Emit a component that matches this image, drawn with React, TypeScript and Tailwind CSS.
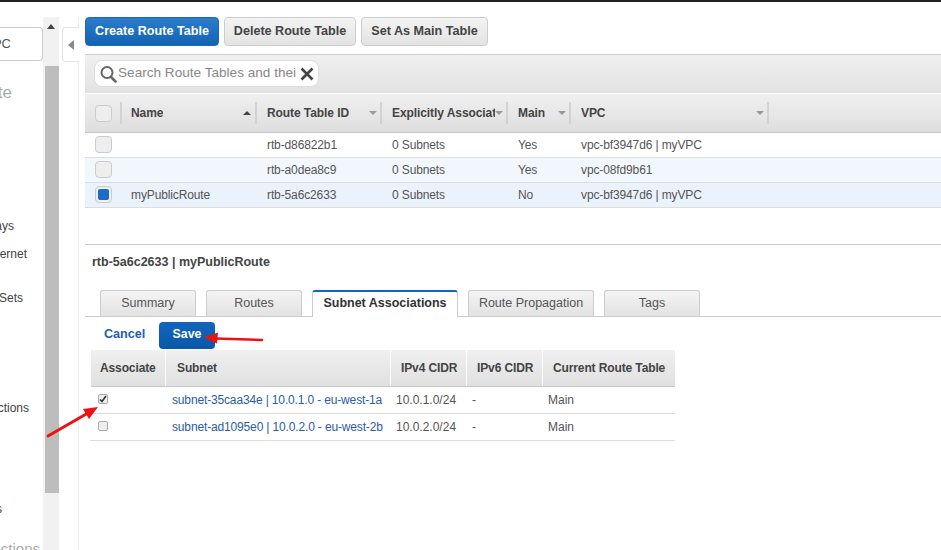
import { ReactNode } from 'react'

const routeRows = [
  { name: '', id: 'rtb-d86822b1', assoc: '0 Subnets', main: 'Yes', vpc: 'vpc-bf3947d6 | myVPC', bg: 'bg-white', checked: false },
  { name: '', id: 'rtb-a0dea8c9', assoc: '0 Subnets', main: 'Yes', vpc: 'vpc-08fd9b61', bg: 'bg-[#f1f7fd]', checked: false },
  { name: 'myPublicRoute', id: 'rtb-5a6c2633', assoc: '0 Subnets', main: 'No', vpc: 'vpc-bf3947d6 | myVPC', bg: 'bg-[#eaf2fb]', checked: true },
]

const subnetRows = [
  { subnet: 'subnet-35caa34e | 10.0.1.0 - eu-west-1a', cidr: '10.0.1.0/24', checked: true },
  { subnet: 'subnet-ad1095e0 | 10.0.2.0 - eu-west-2b', cidr: '10.0.2.0/24', checked: false },
]

const Btn = ({ children, primary, className }: { children: ReactNode; primary?: boolean; className: string }) => (
  <div className={`h-[29px] flex items-center justify-center rounded-[4px] border text-[12.6px] font-bold ${primary ? 'border-[#1d66b0] bg-gradient-to-b from-[#2b7ccb] to-[#1263b5] text-white' : 'border-[#ccc] bg-gradient-to-b from-[#f3f3f3] to-[#e3e3e3] text-[#444]'} ${className}`}>
    {children}
  </div>
)

const Sort = ({ up }: { up?: boolean }) => (
  <div className={`w-0 h-0 border-x-[4px] border-x-transparent ${up ? 'border-b-[4px] border-b-[#444]' : 'border-t-[4px] border-t-[#999]'}`} />
)

const HeadCell = ({ label, up, className }: { label: string; up?: boolean; className?: string }) => (
  <div className={`h-[22px] flex items-center justify-between border-r-2 border-r-[#d2d2d2] overflow-hidden ${className ?? 'pl-[10px] pr-[3px]'}`}>
    <span className="whitespace-nowrap overflow-hidden">{label}</span>
    <div className="shrink-0"><Sort up={up} /></div>
  </div>
)

const Tab = ({ label, active, className }: { label: string; active?: boolean; className: string }) => (
  <div className={`flex items-center justify-center rounded-t-[3px] ${active ? 'h-[27px] pb-[2px] border-x border-x-[#ccc] border-t-2 border-t-[#1166bb] bg-white font-bold text-[#333] text-[12.5px]' : 'h-[26px] border border-b-0 border-[#ccc] bg-gradient-to-b from-[#f4f4f4] to-[#e2e2e2] text-[#555] text-[12.5px]'} ${className}`}>
    {label}
  </div>
)

const SideItem = ({ label, className }: { label: string; className: string }) => (
  <div className={`flex justify-end whitespace-nowrap ${className}`}>{label}</div>
)

export default function App() {
  return (
    <div className="relative w-[941px] h-[550px] overflow-hidden bg-white text-[12px] text-[#444] font-['Liberation_Sans',Arial,sans-serif]">
      <div className="h-[2px] bg-[#222]" />
      <div className="flex h-[548px]">
        {/* left nav, cut off by the scroll position */}
        <div className="w-[43px] shrink-0 overflow-hidden">
          <div className="mt-[25px] h-[34px] w-[43px] flex items-center justify-end pr-[31px] rounded-r-[4px] border border-l-0 border-[#ccc] whitespace-nowrap text-[13px] text-[#555]">
            Filter by VPC
          </div>
          <SideItem label="Route" className="mt-[21px] pr-[31px] text-[17px] leading-[22px] text-[#aaa]" />
          <SideItem label="Egress Only Gateways" className="mt-[115px] pr-[29px] leading-[14px]" />
          <SideItem label="Egress Internet" className="mt-[14px] pr-[16px] leading-[14px]" />
          <SideItem label="DHCP Options Sets" className="mt-[30px] pr-[20px] leading-[14px]" />
          <SideItem label="Peering Connections" className="mt-[96px] pr-[14px] leading-[14px]" />
          <SideItem label="Endpoints" className="mt-[87px] pr-[41px] leading-[14px]" />
          <SideItem label="Connections" className="mt-[24px] pr-[3px] text-[15px] leading-[18px] text-[#aaa]" />
        </div>

        {/* scrollbar */}
        <div className="w-[16px] shrink-0 mt-[15px] bg-[#f1f1f1] flex flex-col items-center">
          <div className="mt-[7px] w-0 h-0 border-x-[4px] border-x-transparent border-b-[5px] border-b-[#444]" />
          <div className="mt-[37px] ml-[1px] w-[14px] h-[427px] bg-[#bdbdbd]" />
        </div>

        {/* collapse handle + divider */}
        <div className="w-[20px] shrink-0 mt-[15px] border-r border-r-[#eee] pl-[3px]">
          <div className="mt-[10px] h-[35px] w-[17px] border border-r-0 border-[#e4e4e4] rounded-l-[4px] bg-white flex items-center justify-center">
            <div className="w-0 h-0 border-y-[5px] border-y-transparent border-r-[6px] border-r-[#888]" />
          </div>
        </div>

        {/* main pane */}
        <div className="flex-1 min-w-0 pl-[6px]">
          <div className="mt-[15px] flex gap-[5px]">
            <Btn primary className="w-[134px]">Create Route Table</Btn>
            <Btn className="w-[132px]">Delete Route Table</Btn>
            <Btn className="w-[127px]">Set As Main Table</Btn>
          </div>

          <div className="mt-[8px] h-[39px] border-t border-[#ccc] bg-gradient-to-b from-[#f0f0f0] to-[#e2e2e2] pl-[9px] pt-[5px]">
            <div className="w-[225px] h-[27px] bg-white border border-[#ddd] rounded-[8px] flex items-center pl-[5px] pr-[3px]">
              <svg width="17" height="18" viewBox="0 0 17 18" className="shrink-0" fill="none" stroke="#666" strokeWidth="2">
                <circle cx="7" cy="7.5" r="5.5" />
                <path d="M11 12l4.500 4.500" strokeWidth="2.500" strokeLinecap="round" />
              </svg>
              <span className="ml-[1px] w-[178px] overflow-hidden whitespace-nowrap text-[13.6px] text-[#888]">Search Route Tables and their Properties</span>
              <svg width="14" height="14" viewBox="0 0 14 14" className="ml-[4px] shrink-0" stroke="#444" strokeWidth="2.600">
                <path d="M1.500 1.500l11 11M12.500 1.500l-11 11" />
              </svg>
            </div>
          </div>

          <div className="h-[40px] border-t border-t-white border-b border-b-[#c8c8c8] bg-gradient-to-b from-[#f0f0f0] to-[#dedede] grid grid-cols-[37px_135px_125px_126px_63px_198px_1fr] items-center font-bold tracking-[-0.08px]">
            <div className="h-[22px] border-r-2 border-r-[#d2d2d2] pl-[10px] flex items-center">
              <div className="w-[17px] h-[17px] rounded-[4px] border border-[#ccc] bg-[#eee]" />
            </div>
            <HeadCell label="Name" up className="pl-[9px] pr-[4px]" />
            <HeadCell label="Route Table ID" />
            <HeadCell label="Explicitly Associated" />
            <HeadCell label="Main" />
            <HeadCell label="VPC" />
          </div>

          {routeRows.map((row) => (
            <div key={row.id} className={`h-[25px] border-b border-b-[#ddd] grid grid-cols-[36px_136px_125px_126px_63px_1fr] items-center text-[#555] tracking-[-0.12px] ${row.bg}`}>
              <div className="pl-[10px] h-[24px] overflow-hidden pt-[3px]">
                <div className="w-[17px] h-[17px] rounded-[4px] border border-[#ccc] bg-[#eee] p-[2px]">
                  {row.checked && <div className="w-full h-full rounded-[2px] bg-[#1a6cc4]" />}
                </div>
              </div>
              <div className="pl-[10px]">{row.name}</div>
              <div className="pl-[10px]">{row.id}</div>
              <div className="pl-[10px]">{row.assoc}</div>
              <div className="pl-[10px]">{row.main}</div>
              <div className="pl-[10px]">{row.vpc}</div>
            </div>
          ))}

          <div className="mt-[36px] border-t border-[#ccc] pl-[7px] pt-[8px] h-[46px] font-bold text-[12.5px] text-[#444]">
            rtb-5a6c2633 | myPublicRoute
          </div>

          <div className="h-[27px] border-b border-[#ccc] flex items-end gap-[10px] pl-[15px]">
            <Tab label="Summary" className="w-[96px]" />
            <Tab label="Routes" className="w-[96px]" />
            <Tab label="Subnet Associations" active className="w-[146px] -mb-px" />
            <Tab label="Route Propagation" className="w-[126px]" />
            <Tab label="Tags" className="w-[96px]" />
          </div>

          <div className="mt-[5px] flex items-center pl-[19px] h-[27px]">
            <span className="w-[55px] pb-[2px] text-[#1f5fb0] font-bold text-[12.6px]">Cancel</span>
            <div className="w-[56px] h-[27px] pb-[2px] rounded-[4px] bg-gradient-to-b from-[#1166bb] to-[#0b57a8] text-white font-bold text-[12.4px] flex items-center justify-center">Save</div>
          </div>

          <div className="ml-[6px] mt-[1px] w-[584px]">
            <div className="h-[37px] border-b border-b-[#c8c8c8] bg-gradient-to-b from-[#f0f0f0] to-[#e0e0e0] grid grid-cols-[75px_225px_76px_76px_1fr] items-center font-bold tracking-[-0.12px]">
              <div className="h-full flex items-center pl-[9px] border-r border-r-white">Associate</div>
              <div className="h-full flex items-center pl-[11px] border-r border-r-white">Subnet</div>
              <div className="h-full flex items-center pl-[10px] border-r border-r-white">IPv4 CIDR</div>
              <div className="h-full flex items-center pl-[10px] border-r border-r-white">IPv6 CIDR</div>
              <div className="h-full flex items-center pl-[10px]">Current Route Table</div>
            </div>
            {subnetRows.map((row) => (
              <div key={row.cidr} className="-ml-px h-[27px] border-b border-b-[#ddd] grid grid-cols-[82px_224px_76px_76px_1fr] items-center text-[#555]">
                <div className="pl-[8px] pb-[3px]">
                  <div className="w-[10px] h-[10px] rounded-[2px] border border-[#aaa] bg-[#eee] flex items-center justify-center">
                    {row.checked && (
                      <svg width="8" height="8" viewBox="0 0 8 8" fill="none" stroke="#333" strokeWidth="1.600">
                        <path d="M1 4.500l2 2 4-5.500" />
                      </svg>
                    )}
                  </div>
                </div>
                <div className="text-[#2a5caa] whitespace-nowrap tracking-[-0.15px]">{row.subnet}</div>
                <div>{row.cidr}</div>
                <div>-</div>
                <div>Main</div>
              </div>
            ))}
          </div>
        </div>
      </div>

      {/* red annotation arrows */}
      <svg className="absolute left-0 top-0 pointer-events-none" width="941" height="550" fill="none">
        <path d="M262 340L216 338.500" stroke="#ee1111" strokeWidth="2.500" strokeLinecap="round" />
        <path d="M204 337.500l14-5-1 11z" fill="#ee1111" />
        <path d="M48 436L88 413" stroke="#ee1111" strokeWidth="3" strokeLinecap="round" />
        <path d="M98 407l-15 2 6 10z" fill="#ee1111" />
      </svg>
    </div>
  )
}
